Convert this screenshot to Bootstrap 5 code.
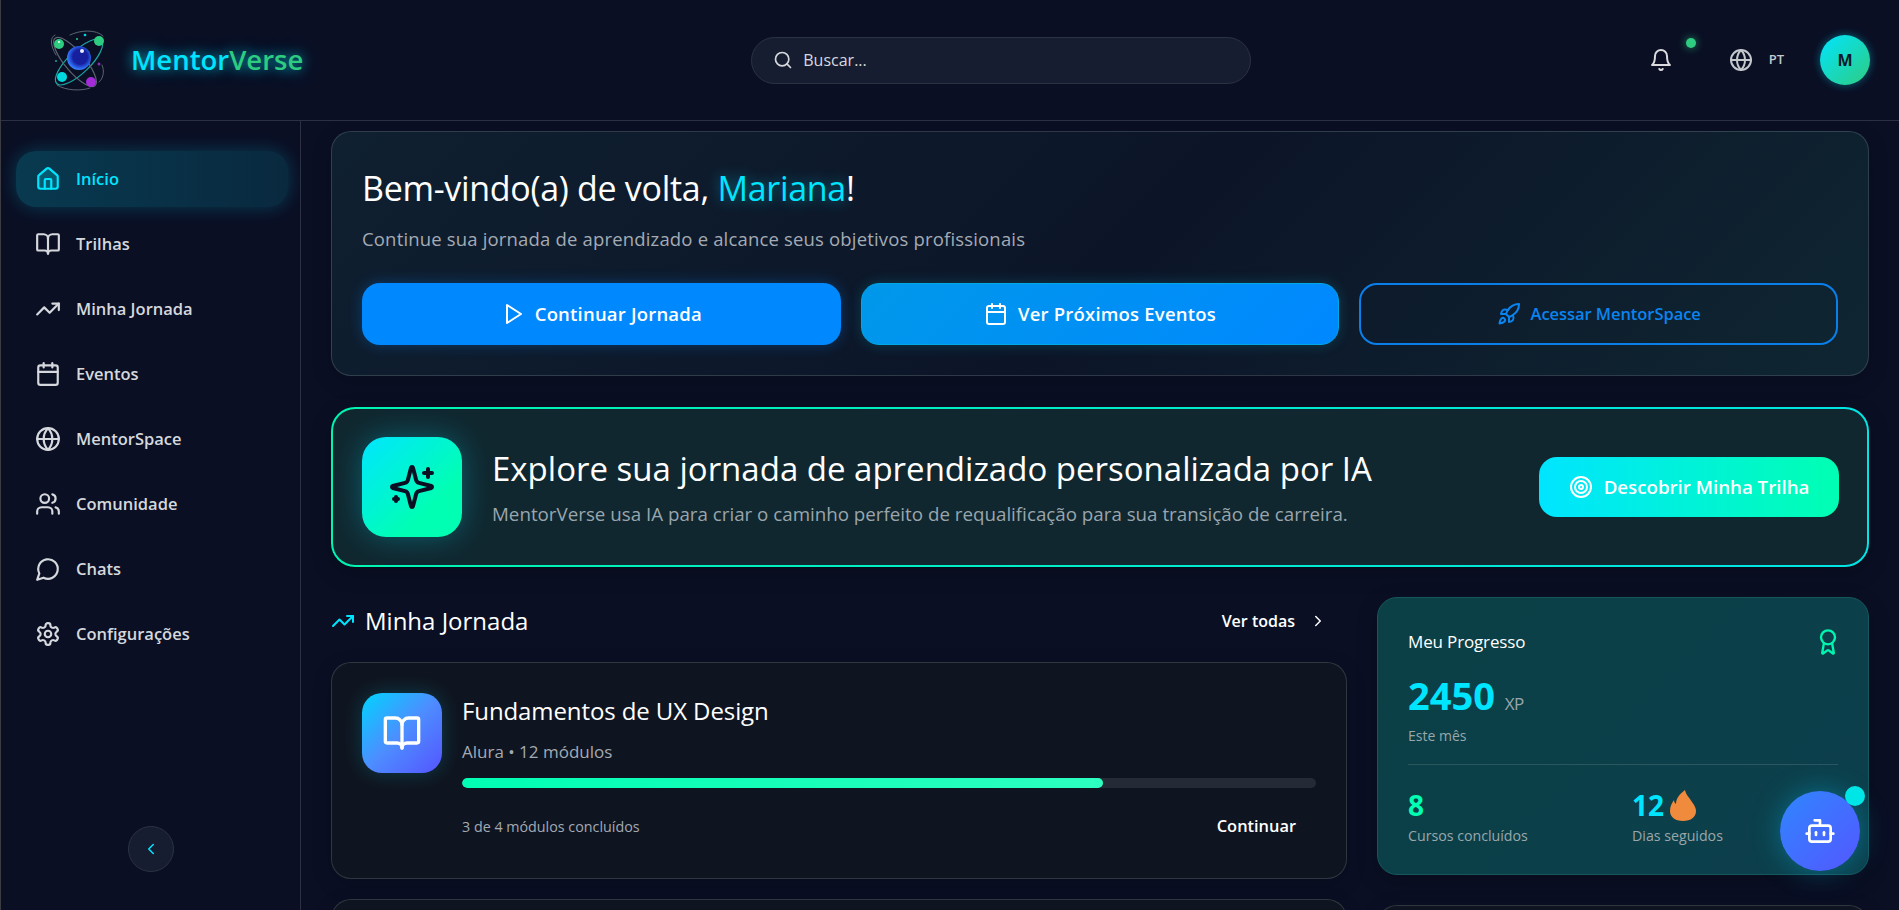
<!DOCTYPE html>
<html lang="pt">
<head>
<meta charset="utf-8">
<title>MentorVerse</title>
<link href="https://cdn.jsdelivr.net/npm/bootstrap@5.3.0/dist/css/bootstrap.min.css" rel="stylesheet">
<style>
:root{--cy:#00e5ff;--gr:#00ffb3;--bg:#0a0f24;--line:rgba(255,255,255,.14);--muted:#a3aab5;}
html,body{height:100%;overflow:hidden;}
body{background:var(--bg);color:#fff;font-family:"Open Sans","Noto Sans",sans-serif;border-left:1px solid #3a3c42;}
svg.ico{fill:none;stroke:currentColor;stroke-width:2;stroke-linecap:round;stroke-linejoin:round;flex:none;}
.s28{width:28px;height:28px}.s26{width:26px;height:26px}.s24{width:24px;height:24px}.s20{width:20px;height:20px}.s18{width:18px;height:18px}
.topbar{height:121px;border-bottom:1px solid var(--line);padding:0 29px 0 47px;}
.logo-svg{width:58px;height:62px;flex:none;}
.wordmark{font-size:27.5px;font-weight:600;margin-left:25px;color:var(--cy);text-shadow:0 0 12px rgba(0,229,255,.65),0 0 22px rgba(0,229,255,.3);}
.wordmark span{color:#2ecc80;}
.search-box{width:500px;height:47px;background:#171d31;border:1px solid #2c3242;border-radius:24px;padding:0 21px;color:#d5d9de;font-size:16px;gap:10px;margin-left:448px;}
.tools{margin-left:auto;color:#d9dbde;}
.bell-wrap{width:60px;height:60px;padding-right:10px;}
.bell-dot{position:absolute;right:0;top:8px;width:10px;height:10px;border-radius:50%;background:#2ecc80;box-shadow:0 0 8px rgba(46,204,128,.7);}
.lang{font-size:13px;font-weight:600;color:#c4c8cd;gap:16px;margin:0 36px 0 33px;}
.avatar{width:50px;height:50px;border-radius:50%;background:linear-gradient(135deg,#00e5ff,#2ecc80);color:#0a1a2c;font-weight:700;font-size:16px;box-shadow:0 0 8px rgba(0,229,255,.4);}
.shell{height:789px;}
.side{width:300px;flex:none;border-right:1px solid var(--line);padding:30px 12px 0 15px;position:relative;}
.side-link{height:56px;padding:0 20px 0 19px;margin-bottom:9px;color:#d5d8dc;font-size:16.5px;font-weight:600;gap:15px;border-radius:20px;text-decoration:none;}
.side-link.on{color:var(--cy);background:linear-gradient(90deg,rgba(0,229,255,.2),rgba(0,229,255,.12));box-shadow:0 0 18px rgba(0,229,255,.22);}
.side-link.on svg path.fillit{fill:rgba(0,229,255,.2);}
.collapse-btn{position:absolute;left:127px;bottom:38px;width:46px;height:46px;border-radius:50%;background:#161d30;border:1px solid #2c3242;color:var(--cy);padding:0;}
.content{flex:1;padding:10px 30px 0 30px;min-width:0;overflow:hidden;}
.hero{height:245px;border:1px solid var(--line);border-radius:20px;padding:30px;margin-bottom:31px;background:linear-gradient(135deg,#0f2030,#0c1528 52%,#0f2632);box-shadow:0 6px 20px rgba(0,0,0,.2);}
.hero-title{font-size:34px;font-weight:400;letter-spacing:-.3px;line-height:48px;margin:2px 0 14px;}
.hero-title span{color:var(--cy);text-shadow:0 0 14px rgba(0,229,255,.45);}
.hero-sub{font-size:18.5px;letter-spacing:.17px;color:#a4abb4;line-height:26px;margin:0 0 31px;}
.gap-actions{display:grid;grid-template-columns:repeat(3,1fr);gap:20px;}
.act{height:62px;border-radius:18px;font-size:18.5px;font-weight:600;letter-spacing:.2px;gap:10px;color:#fff;border:0;}
.act-a{background:#0088ff;box-shadow:0 0 14px rgba(0,136,255,.3);}
.act-b{background:linear-gradient(135deg,#0098ea,#0088ff);border:1px solid #00a8e8;box-shadow:0 0 14px rgba(0,229,255,.18);}
.act-c{background:transparent;border:2px solid #0a7fea;color:#0a84f0;font-size:16.5px;letter-spacing:-.05px;}
.btn.act-a:hover,.btn.act-b:hover{color:#fff}
.banner{height:160px;border-radius:24px;border:2px solid transparent;padding:0 28px 0 29px;margin-bottom:31px;gap:30px;background:linear-gradient(#10272f,#10272f) padding-box,linear-gradient(100deg,#00f5b0,#00e5e5) border-box;box-shadow:0 6px 20px rgba(0,0,0,.25);}
.spark-box{width:100px;height:100px;border-radius:24px;flex:none;color:#0a0f24;background:linear-gradient(135deg,#00e5ff,#00ffb3 70%);box-shadow:0 0 30px rgba(0,229,255,.3);}
.spark-box svg{width:48px;height:48px;}
.banner-title{font-size:33px;font-weight:400;line-height:44px;margin:0 0 9px;}
.banner-sub{font-size:18.75px;color:#9aa5ad;margin:0;line-height:28px;}
.find-btn{width:300px;height:60px;border-radius:18px;border:0;flex:none;margin-left:auto;color:#fff;font-size:18.7px;font-weight:600;gap:11px;background:linear-gradient(90deg,#00e5ff,#00ffb3);}
.find-btn:hover{color:#fff}
.twocol{display:grid;grid-template-columns:1016px 492px;gap:30px;}
.sec-head{height:48px;margin-top:-1px;margin-bottom:17px;}
.sec-title{font-size:24px;font-weight:400;margin:0;}
.cy-ico{color:var(--cy);}
.sec-gap{gap:10px;}
.see-all{font-size:16px;font-weight:600;color:#fff;text-decoration:none;gap:14px;padding-right:20px;}
.j-card{background:#0f1520;border:1px solid var(--line);border-radius:20px;padding:30px;height:217px;margin-bottom:20px;gap:20px;box-shadow:0 6px 20px rgba(0,0,0,.2);}
.j-ico{width:80px;height:80px;flex:none;border-radius:20px;color:#fff;background:linear-gradient(135deg,#00d4ff,#4d8dff 50%,#5555ff);box-shadow:0 0 20px rgba(0,229,255,.2);}
.j-ico svg{width:40px;height:40px;}
.j-title{font-size:24px;font-weight:400;letter-spacing:-.1px;line-height:36px;margin:0 0 11px;}
.j-sub{font-size:17px;color:#a3aab5;line-height:24px;margin:0 0 14px;}
.j-track{height:10px;background:#242a36;border-radius:5px;margin-bottom:26px;}
.j-track .progress-bar{background:linear-gradient(90deg,#00ffb3,#2dffc0);border-radius:5px;}
.j-cap{font-size:14.3px;color:#a3aab5;}
.j-go{font-size:16.4px;font-weight:600;color:#fff;padding:0 20px 0 0;border:0;background:none;}
.p-card{height:278px;margin-top:-1px;margin-bottom:31px;border:1px solid #14585e;border-radius:20px;padding:31px 30px 0;background:linear-gradient(135deg,#0b4046,#0c3f4c);box-shadow:0 6px 20px rgba(0,0,0,.25);position:relative;}
.p-card-dark{background:#0f1520;border-color:var(--line);}
.p-head{font-size:17px;font-weight:500;letter-spacing:-.15px;line-height:26px;margin:0;}
.p-award{color:#00f5b0;margin:-2px -4px -2px 0;}
.xp{font-size:38px;font-weight:700;color:var(--cy);line-height:48px;margin-top:16px;}
.xp small{font-size:17px;font-weight:400;color:#98a6ab;letter-spacing:-.6px;}
.p-note{font-size:14px;color:#9aa7ab;line-height:22px;margin-top:-3px;}
.p-rule{border-top:1px solid rgba(255,255,255,.13);margin:17px 0 20px;}
.p-stats{display:grid;grid-template-columns:224px 1fr;}
.num{font-size:28px;font-weight:700;line-height:41px;}
.num-g{color:var(--gr)}.num-c{color:var(--cy)}
svg.flame{width:26px;height:31px;margin-left:6px;flex:none;}
.p-lab{font-size:14.2px;color:#9aa7ab;line-height:20px;}
.bot-btn{position:fixed;left:1780px;top:791px;width:80px;height:80px;border-radius:50%;background:linear-gradient(135deg,#2f86ff,#5457ff);border:0;color:#fff;box-shadow:0 0 28px rgba(0,200,255,.35);padding:0;}
.bot-btn svg{width:32px;height:32px;}
.bot-dot{position:absolute;right:-5px;top:-5px;width:20px;height:20px;border-radius:50%;background:#00e5e5;}
</style>
</head>
<body>
<header class="topbar d-flex align-items-center">
  <svg class="logo-svg" viewBox="0 0 58 62" aria-label="MentorVerse">
    <defs>
      <radialGradient id="orb" cx=".55" cy=".45" r=".55"><stop offset=".55" stop-color="#161f9e"/><stop offset=".85" stop-color="#2a62ea"/><stop offset="1" stop-color="#3a80ff"/></radialGradient>
    </defs>
    <g fill="none" stroke-linecap="round">
      <ellipse cx="31" cy="33" rx="31" ry="11" transform="rotate(-44 31 33)" stroke="#1aa6a6" stroke-width="1.2"/>
      <ellipse cx="27" cy="33" rx="31" ry="10" transform="rotate(50 27 33)" stroke="#5b6470" stroke-width="1.2"/>
      <path d="M8 26C2 16 2 8 7 6M22 6C32 1 48 0 55 7M54 36C57 42 55 50 51 53M9 56C18 62 34 62 42 59" stroke="#5b6470" stroke-width="1"/>
    </g>
    <circle cx="31" cy="29" r="12" fill="url(#orb)"/>
    <circle cx="34" cy="22" r="2" fill="#e6f0ff"/>
    <circle cx="11" cy="15" r="5" fill="#2ecc80"/><circle cx="11" cy="13" r="1" fill="#fff"/>
    <circle cx="51" cy="12" r="5" fill="#2ecc80"/>
    <circle cx="14" cy="48" r="5" fill="#00d8e0"/>
    <circle cx="43" cy="53" r="5" fill="#a32bd8"/>
    <circle cx="37" cy="6" r="1.3" fill="#00d8e0"/>
    <circle cx="29" cy="10" r="1" fill="#2ecc80"/>
    <circle cx="8" cy="32" r="1" fill="#1aa6a6"/>
    <circle cx="51" cy="35" r="1.5" fill="#8a2bb0"/>
  </svg>
  <div class="wordmark">Mentor<span>Verse</span></div>
  <div class="search-box d-flex align-items-center">
    <svg class="ico s20" viewBox="0 0 24 24"><circle cx="11" cy="11" r="8"/><path d="m21 21-4.3-4.3"/></svg>
    <span>Buscar...</span>
  </div>
  <div class="tools d-flex align-items-center">
    <div class="bell-wrap position-relative d-flex align-items-center justify-content-center">
      <svg class="ico s24" viewBox="0 0 24 24"><path d="M6 8a6 6 0 0 1 12 0c0 7 3 9 3 9H3s3-2 3-9"/><path d="M10.3 21a1.94 1.94 0 0 0 3.4 0"/></svg>
      <span class="bell-dot"></span>
    </div>
    <div class="lang d-flex align-items-center">
      <svg class="ico s24" viewBox="0 0 24 24"><circle cx="12" cy="12" r="10"/><path d="M12 2a14.5 14.5 0 0 0 0 20 14.5 14.5 0 0 0 0-20"/><path d="M2 12h20"/></svg>
      <span>PT</span>
    </div>
    <div class="avatar d-flex align-items-center justify-content-center">M</div>
  </div>
</header>
<div class="shell d-flex">
  <aside class="side">
    <nav class="nav flex-column">
      <a class="nav-link side-link on d-flex align-items-center" href="#"><svg class="ico s26" viewBox="0 0 24 24"><path class="fillit" d="M3 10a2 2 0 0 1 .709-1.528l7-5.999a2 2 0 0 1 2.582 0l7 5.999A2 2 0 0 1 21 10v9a2 2 0 0 1-2 2H5a2 2 0 0 1-2-2z"/><path d="M15 21v-8a1 1 0 0 0-1-1h-4a1 1 0 0 0-1 1v8"/></svg>Início</a>
      <a class="nav-link side-link d-flex align-items-center" href="#"><svg class="ico s26" viewBox="0 0 24 24"><path d="M12 7v14"/><path d="M3 18a1 1 0 0 1-1-1V4a1 1 0 0 1 1-1h5a4 4 0 0 1 4 4 4 4 0 0 1 4-4h5a1 1 0 0 1 1 1v13a1 1 0 0 1-1 1h-6a3 3 0 0 0-3 3 3 3 0 0 0-3-3z"/></svg>Trilhas</a>
      <a class="nav-link side-link d-flex align-items-center" href="#"><svg class="ico s26" viewBox="0 0 24 24"><polyline points="22 7 13.5 15.5 8.5 10.5 2 17"/><polyline points="16 7 22 7 22 13"/></svg>Minha Jornada</a>
      <a class="nav-link side-link d-flex align-items-center" href="#"><svg class="ico s26" viewBox="0 0 24 24"><path d="M8 2v4"/><path d="M16 2v4"/><rect width="18" height="18" x="3" y="4" rx="2"/><path d="M3 10h18"/></svg>Eventos</a>
      <a class="nav-link side-link d-flex align-items-center" href="#"><svg class="ico s26" viewBox="0 0 24 24"><circle cx="12" cy="12" r="10"/><path d="M12 2a14.5 14.5 0 0 0 0 20 14.5 14.5 0 0 0 0-20"/><path d="M2 12h20"/></svg>MentorSpace</a>
      <a class="nav-link side-link d-flex align-items-center" href="#"><svg class="ico s26" viewBox="0 0 24 24"><path d="M16 21v-2a4 4 0 0 0-4-4H6a4 4 0 0 0-4 4v2"/><circle cx="9" cy="7" r="4"/><path d="M22 21v-2a4 4 0 0 0-3-3.87"/><path d="M16 3.13a4 4 0 0 1 0 7.75"/></svg>Comunidade</a>
      <a class="nav-link side-link d-flex align-items-center" href="#"><svg class="ico s26" viewBox="0 0 24 24"><path d="M7.9 20A9 9 0 1 0 4 16.1L2 22Z"/></svg>Chats</a>
      <a class="nav-link side-link d-flex align-items-center" href="#"><svg class="ico s26" viewBox="0 0 24 24"><path d="M12.22 2h-.44a2 2 0 0 0-2 2v.18a2 2 0 0 1-1 1.73l-.43.25a2 2 0 0 1-2 0l-.15-.08a2 2 0 0 0-2.73.73l-.22.38a2 2 0 0 0 .73 2.73l.15.1a2 2 0 0 1 1 1.72v.51a2 2 0 0 1-1 1.74l-.15.09a2 2 0 0 0-.73 2.73l.22.38a2 2 0 0 0 2.73.73l.15-.08a2 2 0 0 1 2 0l.43.25a2 2 0 0 1 1 1.73V20a2 2 0 0 0 2 2h.44a2 2 0 0 0 2-2v-.18a2 2 0 0 1 1-1.73l.43-.25a2 2 0 0 1 2 0l.15.08a2 2 0 0 0 2.73-.73l.22-.39a2 2 0 0 0-.73-2.73l-.15-.08a2 2 0 0 1-1-1.74v-.5a2 2 0 0 1 1-1.74l.15-.09a2 2 0 0 0 .73-2.73l-.22-.38a2 2 0 0 0-2.73-.73l-.15.08a2 2 0 0 1-2 0l-.43-.25a2 2 0 0 1-1-1.73V4a2 2 0 0 0-2-2z"/><circle cx="12" cy="12" r="3"/></svg>Configurações</a>
    </nav>
    <button class="btn collapse-btn d-flex align-items-center justify-content-center" type="button" aria-label="Recolher"><svg class="ico s18" viewBox="0 0 24 24"><path d="m15 18-6-6 6-6"/></svg></button>
  </aside>
  <main class="content">
    <section class="hero">
      <h1 class="hero-title">Bem-vindo(a) de volta, <span>Mariana</span>!</h1>
      <p class="hero-sub">Continue sua jornada de aprendizado e alcance seus objetivos profissionais</p>
      <div class="gap-actions">
        <button class="btn act act-a d-flex align-items-center justify-content-center" type="button"><svg class="ico s24" viewBox="0 0 24 24"><polygon points="6 3 20 12 6 21 6 3"/></svg>Continuar Jornada</button>
        <button class="btn act act-b d-flex align-items-center justify-content-center" type="button"><svg class="ico s24" viewBox="0 0 24 24"><path d="M8 2v4"/><path d="M16 2v4"/><rect width="18" height="18" x="3" y="4" rx="2"/><path d="M3 10h18"/></svg>Ver Próximos Eventos</button>
        <button class="btn act act-c d-flex align-items-center justify-content-center" type="button"><svg class="ico s24" viewBox="0 0 24 24"><path d="M4.5 16.5c-1.5 1.26-2 5-2 5s3.74-.5 5-2c.71-.84.7-2.13-.09-2.91a2.18 2.18 0 0 0-2.91-.09z"/><path d="m12 15-3-3a22 22 0 0 1 2-3.95A12.88 12.88 0 0 1 22 2c0 2.72-.78 7.5-6 11a22.35 22.35 0 0 1-4 2z"/><path d="M9 12H4s.55-3.03 2-4c1.62-1.08 5 0 5 0"/><path d="M12 15v5s3.03-.55 4-2c1.08-1.62 0-5 0-5"/></svg>Acessar MentorSpace</button>
      </div>
    </section>
    <section class="banner d-flex align-items-center">
      <div class="spark-box d-flex align-items-center justify-content-center"><svg class="ico" viewBox="0 0 24 24"><path d="M9.937 15.5A2 2 0 0 0 8.5 14.063l-6.135-1.582a.5.5 0 0 1 0-.962L8.5 9.936A2 2 0 0 0 9.937 8.5l1.582-6.135a.5.5 0 0 1 .963 0L14.063 8.5A2 2 0 0 0 15.5 9.937l6.135 1.581a.5.5 0 0 1 0 .964L15.5 14.063a2 2 0 0 0-1.437 1.437l-1.582 6.135a.5.5 0 0 1-.963 0z"/><path d="M20 3v4"/><path d="M22 5h-4"/><path d="M4 17v2"/><path d="M5 18H3"/></svg></div>
      <div>
        <h2 class="banner-title">Explore sua jornada de aprendizado personalizada por IA</h2>
        <p class="banner-sub">MentorVerse usa IA para criar o caminho perfeito de requalificação para sua transição de carreira.</p>
      </div>
      <button class="btn find-btn d-flex align-items-center justify-content-center" type="button"><svg class="ico s24" viewBox="0 0 24 24"><circle cx="12" cy="12" r="10"/><circle cx="12" cy="12" r="6"/><circle cx="12" cy="12" r="2"/></svg>Descobrir Minha Trilha</button>
    </section>
    <div class="twocol">
      <div>
        <div class="sec-head d-flex align-items-center justify-content-between">
          <div class="d-flex align-items-center sec-gap">
            <svg class="ico s24 cy-ico" viewBox="0 0 24 24"><polyline points="22 7 13.5 15.5 8.5 10.5 2 17"/><polyline points="16 7 22 7 22 13"/></svg>
            <h2 class="sec-title">Minha Jornada</h2>
          </div>
          <a class="see-all d-flex align-items-center" href="#">Ver todas <svg class="ico s18" viewBox="0 0 24 24"><path d="m9 18 6-6-6-6"/></svg></a>
        </div>
        <article class="j-card d-flex">
          <div class="j-ico d-flex align-items-center justify-content-center"><svg class="ico" viewBox="0 0 24 24"><path d="M12 7v14"/><path d="M3 18a1 1 0 0 1-1-1V4a1 1 0 0 1 1-1h5a4 4 0 0 1 4 4 4 4 0 0 1 4-4h5a1 1 0 0 1 1 1v13a1 1 0 0 1-1 1h-6a3 3 0 0 0-3 3 3 3 0 0 0-3-3z"/></svg></div>
          <div class="flex-grow-1">
            <h3 class="j-title">Fundamentos de UX Design</h3>
            <p class="j-sub">Alura • 12 módulos</p>
            <div class="progress j-track"><div class="progress-bar" style="width:75%"></div></div>
            <div class="d-flex align-items-center justify-content-between">
              <span class="j-cap">3 de 4 módulos concluídos</span>
              <button class="btn j-go" type="button">Continuar</button>
            </div>
          </div>
        </article>
        <article class="j-card"></article>
      </div>
      <div>
        <aside class="p-card">
          <div class="d-flex align-items-center justify-content-between">
            <h3 class="p-head">Meu Progresso</h3>
            <svg class="ico s28 p-award" viewBox="0 0 24 24"><path d="m15.477 12.89 1.515 8.526a.5.5 0 0 1-.81.47l-3.58-2.687a1 1 0 0 0-1.197 0l-3.586 2.686a.5.5 0 0 1-.81-.469l1.514-8.526"/><circle cx="12" cy="8" r="6"/></svg>
          </div>
          <div class="xp">2450 <small>XP</small></div>
          <div class="p-note">Este mês</div>
          <div class="p-rule"></div>
          <div class="p-stats">
            <div><div class="num num-g">8</div><div class="p-lab">Cursos concluídos</div></div>
            <div><div class="num num-c d-flex align-items-center">12<svg class="flame" viewBox="0 0 26 31"><path fill="#f08a3c" d="M15 0c1 5 4 7 7 12 3 4 4 7 4 9 0 6-5 10-13 10S0 27 0 21c0-5 2-8 4-11 0 2 1 3 2 4 0-6 4-10 9-14z"/></svg></div><div class="p-lab">Dias seguidos</div></div>
          </div>
        </aside>
        <aside class="p-card p-card-dark"></aside>
      </div>
    </div>
  </main>
</div>
<button class="btn bot-btn d-flex align-items-center justify-content-center" type="button" aria-label="Assistente"><svg class="ico" viewBox="0 0 24 24"><path d="M12 8V4H8"/><rect width="16" height="12" x="4" y="8" rx="2"/><path d="M2 14h2"/><path d="M20 14h2"/><path d="M15 13v2"/><path d="M9 13v2"/></svg><span class="bot-dot"></span></button>
<script src="https://cdn.jsdelivr.net/npm/bootstrap@5.3.0/dist/js/bootstrap.bundle.min.js"></script>
</body>
</html>
